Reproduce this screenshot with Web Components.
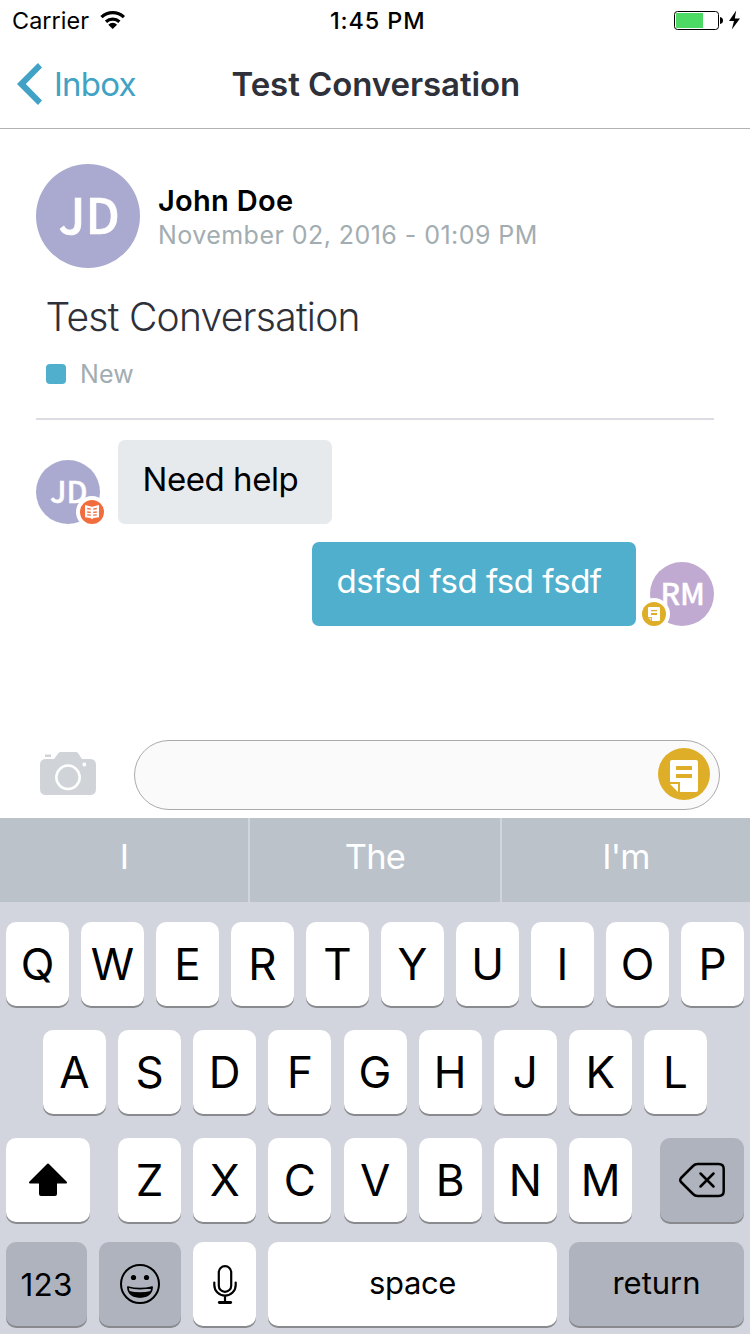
<!DOCTYPE html>
<html lang="en">
<head>
<meta charset="utf-8">
<title>Test Conversation</title>
<style>
  html, body { margin: 0; padding: 0; }
  body { width: 750px; height: 1334px; overflow: hidden; background: #fff; font-family: Inter, "Liberation Sans", sans-serif; }
</style>
</head>
<body>
<conversation-app></conversation-app>
<script>
class Base extends HTMLElement {
  connectedCallback() {
    if (this.shadowRoot) return;
    this.attachShadow({ mode: 'open' }).innerHTML =
      `<style>:host{box-sizing:border-box}*{box-sizing:border-box}svg{display:block;flex:none}</style>${this.render()}`;
  }
}
const define = (name, render) => customElements.define(name, class extends Base { render() { return render(this); } });

/* One line of text; capitals sit on the middle of the line box. */
define('text-line', el => `<style>
  :host { display: block; white-space: pre; flex: none;
    font-size: ${el.getAttribute('size')}px; line-height: ${el.getAttribute('line')}px;
    font-weight: ${el.getAttribute('weight') || 400}; letter-spacing: ${el.getAttribute('track') || 0}px; }
</style><slot></slot>`);

define('status-bar', () => `<style>
  :host { display: grid; grid-template-columns: 318px 1fr auto; height: 40px; padding: 0 9px 0 12px; color: #000; align-items: start; }
  .side { display: flex; align-items: flex-start; }
</style>
<div class="side"><text-line size="23.4" line="41" track="0.05">Carrier</text-line>
  <svg style="margin-left:10.5px" width="26" height="40" viewBox="100 0 26 40" fill="none" stroke="#000">
    <path d="M101.5 17.1A16.3 16.3 0 0 1 123.9 17.1" stroke-width="3.3"/>
    <path d="M106 21.8A9.9 9.9 0 0 1 119.4 21.8" stroke-width="3.2"/>
    <path d="M112.7 29L108.3 24.7A6.2 6.2 0 0 1 117.1 24.7Z" fill="#000" stroke="none"/>
  </svg></div>
<text-line size="23.4" line="41" weight="550" track="0.9">1:45 PM</text-line>
<svg width="68" height="40" viewBox="673 0 68 40">
  <rect x="674.5" y="11.5" width="44" height="18" rx="3" fill="#fff" stroke="#000"/>
  <path d="M677 13H703V28H677Q676 28 676 27V14Q676 13 677 13Z" fill="#4cd964"/>
  <path d="M720 17Q723 17.500 723 20.500Q723 23.500 720 24Z"/>
  <path d="M736.200 10.500L729 21H734L731.800 29.500L740 18.500H734.800Z"/>
</svg>`);

define('nav-bar', () => `<style>
  :host { display: grid; grid-template-columns: 231.5px 1fr; height: 89px; border-bottom: 1px solid #b2b2b2; align-items: center; color: #2e303a; }
  .back { display: flex; align-items: center; color: #40a2c4; height: 88px; }
  svg { margin: 0 11px 0 16px; }
</style>
<div class="back"><svg width="27" height="88" viewBox="16 40 27 88"><path d="M38 63L42 67.500L25.800 84L42 100.500L38 105L17 84Z" fill="#40a2c4"/></svg>
<text-line size="33" line="88" track="-0.8">Inbox</text-line></div>
<text-line size="33" line="88" weight="590" track="-0.07">Test Conversation</text-line>`);

define('user-avatar', el => {
  const s = +el.getAttribute('size'), f = el.getAttribute('font');
  return `<style>
  :host { display: flex; flex: none; position: relative; width: ${s}px; height: ${s}px; border-radius: 50%;
    background: ${el.getAttribute('color')}; color: #fff; align-items: center; justify-content: center; }
  span { font: 500 ${f}px/${s}px "Noto Sans CJK JP", "Noto Sans", sans-serif; height: ${s}px; margin-top: -${(f * 0.11).toFixed(1)}px;
    margin-left: ${f / 22}px; -webkit-text-stroke: ${f / 80}px #fff; }
  ::slotted(source-badge) { position: absolute; bottom: -4px; }
</style><span>${el.getAttribute('initials')}</span><slot></slot>`;
});

define('note-icon', el => `<style>:host{display:block;flex:none}</style>
<svg width="52" height="52" viewBox="0 0 52 52"><circle cx="26" cy="26" r="26" fill="#dfae28"/>
  <path d="M14 12H38Q40 12 40 14V42Q40 44 38 44H22V34H12V14Q12 12 14 12Z" fill="#fff"/>
  <path d="M18.500 18H33.500Q34 18 34 18.500V21.500Q34 22 33.500 22H18.500Q18 22 18 21.500V18.500Q18 18 18.500 18ZM18.500 26H33.500Q34 26 34 26.500V29.500Q34 30 33.500 30H18.500Q18 30 18 29.500V26.500Q18 26 18.500 26Z" fill="#dfae28"/><path d="M12 36H20V44Z" fill="#fff"/></svg>`);

define('source-badge', el => `<style>
  :host { display: block; width: 32px; height: 32px; padding: 4px; border-radius: 50%; background: #fff; }
</style>${el.getAttribute('kind') === 'note' ? `<svg width="24" height="24" viewBox="0 0 24 24"><circle cx="12" cy="12" r="12" fill="#dfae28"/>
  <path d="M7 5H17Q18 5 18 6V18Q18 19 17 19H10V15H6V6Q6 5 7 5Z" fill="#fff"/><path d="M9 8H15V9.300H9ZM9 11H15V13H9Z" fill="#dfae28"/><path d="M6.300 15.800H9.200V18.800Z" fill="#fff" opacity=".7"/></svg>`
  : `<svg width="24" height="24" viewBox="0 0 24 24"><circle cx="12" cy="12" r="12" fill="#f26d3d"/>
  <path d="M5 5L12 6.800L19 5V17.300L13.500 18L12 19.300L10.500 18L5 17.300Z" fill="#fff"/>
  <path d="M7.200 8.500L10.800 9.100M7.200 12L10.800 12.300M16.800 8.500L13.200 9.100M16.800 12L13.200 12.300M7.200 14.800L10.800 15.200M16.800 14.800L13.200 15.200" stroke="#f26d3d" stroke-width="1.300" fill="none"/></svg>`}`);

define('conversation-header', () => `<style>
  :host { display: flex; flex-direction: column; margin: 0 36px; height: 291px; padding-top: 35px; border-bottom: 2px solid #dcdde2; }
  .who { display: flex; gap: 18px; height: 104px; }
  .meta { padding-top: 20px; }
  .name { color: #000; } .date { color: #a2adb2; }
  .subject { color: #2e303a; padding: 26px 0 0 9.500px; }
  .status { display: flex; align-items: center; gap: 14px; padding: 19px 0 0 10px; color: #a2adb2; }
  .status i { width: 20px; height: 20px; border-radius: 4px; background: #4fafcc; }
</style>
<div class="who"><user-avatar size="104" font="49" color="#aaaad1" initials="JD"></user-avatar>
  <div class="meta"><text-line class="name" size="29" line="34" weight="590" track="0.3">John Doe</text-line>
  <text-line class="date" size="25" line="34" track="0.45">November 02, 2016 - 01:09 PM</text-line></div></div>
<text-line class="subject" size="39" line="46" weight="300" track="-0.74">Test Conversation</text-line>
<div class="status"><i></i><text-line size="25" line="30" track="0.1">New</text-line></div>`);

define('message-bubble', el => `<style>
  :host { display: block; height: 84px; padding: 0 24.500px; border-radius: 7px; width: ${el.getAttribute('width')}px;
    background: ${el.getAttribute('fill')}; color: ${el.getAttribute('ink')}; }
</style><text-line size="33" line="79" track="${el.getAttribute('track')}"><slot></slot></text-line>`);

define('message-list', () => `<style>
  :host { display: flex; flex-direction: column; gap: 18px; padding: 20px 36px 0; height: 320px; }
  .row { display: flex; align-items: flex-end; }
  .in { gap: 18px; } .out { justify-content: flex-end; gap: 14px; }
</style>
<div class="row in"><user-avatar size="64" font="30" color="#aaaad1" initials="JD"><source-badge kind="book" style="right:-8px"></source-badge></user-avatar>
  <message-bubble width="214" fill="#e6eaed" ink="#000" track="-0.45">Need help</message-bubble></div>
<div class="row out"><message-bubble width="324" fill="#4fafcc" ink="#fff" track="-0.5">dsfsd fsd fsd fsdf</message-bubble>
  <user-avatar size="64" font="30" color="#c1aad1" initials="RM"><source-badge kind="note" style="left:-12px"></source-badge></user-avatar></div>`);

define('reply-bar', () => `<style>
  :host { display: flex; padding: 0 30px 0 40px; height: 78px; }
  .cam { margin: 11px 38px 0 0; }
  .field { flex: 1; height: 70px; border: 1px solid #aaa; border-radius: 35px; background: #fafafa; display: flex; justify-content: flex-end; padding: 7px 9px; }
</style>
<svg class="cam" width="56" height="45" viewBox="40 751 56 45">
  <path d="M46 759H54L58.500 753Q59.300 752 60.500 752H76Q77.200 752 78 753L82 759H90Q96 759 96 765V789Q96 795 90 795H46Q40 795 40 789V765Q40 759 46 759Z" fill="#d0d4d8"/>
  <rect x="45" y="754.500" width="6" height="2.500" fill="#d0d4d8"/><circle cx="68" cy="777.300" r="11.700" fill="none" stroke="#fff" stroke-width="2.500"/><circle cx="84.300" cy="764.500" r="1.900" fill="#fff"/></svg>
<div class="field"><note-icon></note-icon></div>`);

define('suggestion-bar', () => `<style>
  :host { display: grid; grid-template-columns: 248px 250px 248px; gap: 2px; height: 84px; background: #d2d5dd; color: #fff; }
  div { background: #bbc2ca; display: flex; justify-content: center; }
  .first { padding-left: 1px; }
</style>
<div class="first"><text-line size="34.5" line="77">I</text-line></div>
<div><text-line size="34.5" line="77" track="-0.8">The</text-line></div>
<div><text-line size="34.5" line="77" track="-0.7">I'm</text-line></div>`);

define('key-cap', el => `<style>
  :host { display: flex; flex: none; justify-content: center; align-items: center; height: 84px; width: ${el.getAttribute('width') || 63}px;
    border-radius: 10px; color: #000; background: ${el.hasAttribute('dark') ? '#aeb3be' : '#fff'}; box-shadow: 0 2px 0 #898a8d; }
  ::slotted(text-line) { align-self: flex-start; }
</style><slot></slot>`);

const letters = s => [...s].map(c => `<key-cap><text-line size="44" line="84">${c}</text-line></key-cap>`).join('');

define('key-board', () => `<style>
  :host { display: flex; flex-direction: column; gap: 24px; height: 432px; padding: 20px 6px 0; background: #d2d5dd; }
  .row, .group { display: flex; justify-content: space-between; }
  .home { padding: 0 37px; } .group { width: 514px; justify-content: flex-start; gap: 12.200px; }
  .last { margin-top: -4px; justify-content: flex-start; gap: 12px; }
</style>
<div class="row">${letters('QWERTYUIOP')}</div>
<div class="row home">${letters('ASDFGHJKL')}</div>
<div class="row">
  <key-cap width="84"><svg width="40" height="36" viewBox="28 1162 40 36"><path d="M48 1164.500L66 1182.500H56V1194Q56 1195 55 1195H41Q40 1195 40 1194V1182.500H30Z" stroke="#000" stroke-width="2" stroke-linejoin="round"/></svg></key-cap>
  <div class="group">${letters('ZXCVBNM')}</div>
  <key-cap dark width="84"><svg width="48" height="36" viewBox="678 1162 48 36" fill="none" stroke="#000" stroke-width="2.500" stroke-linecap="round" stroke-linejoin="round">
    <path d="M697.500 1164H718.500Q723.700 1164 723.700 1169V1191Q723.700 1196 718.500 1196H697.500Q695 1196 693 1194L681 1182Q679.500 1180 681 1178L693 1166Q695 1164 697.500 1164Z"/><path d="M700.500 1173.500L713.500 1186.500M713.500 1173.500L700.500 1186.500"/></svg></key-cap>
</div>
<div class="row last">
  <key-cap dark width="81"><text-line size="31.5" line="86" track="0.2">123</text-line></key-cap>
  <key-cap dark width="82"><svg width="42" height="42" viewBox="0 0 42 42"><circle cx="21" cy="21" r="19" fill="none" stroke="#000" stroke-width="2"/><circle cx="14.500" cy="14.500" r="2.600"/><circle cx="27.500" cy="14.500" r="2.600"/>
    <path d="M8.800 24Q21 27.200 33.200 24Q32.500 34 21 34Q9.500 34 8.800 24Z" fill="none" stroke="#000" stroke-width="1.600" stroke-linejoin="round"/><path d="M10 28Q21 30.700 32 28Q29.500 34.500 21 34.500Q12.500 34.500 10 28Z"/></svg></key-cap>
  <key-cap><svg width="26" height="42" viewBox="0 0 26 42" fill="none" stroke="#000" stroke-width="2.200" stroke-linecap="round"><rect x="6.800" y="3.100" width="12.400" height="25.800" rx="6.200"/><path d="M2.300 19.500V22A10.700 10.700 0 0 0 23.700 22V19.500M13 33V38"/><path d="M7.300 39.500H18.700" stroke-width="2.800"/></svg></key-cap>
  <key-cap width="289"><text-line size="31" line="82" track="-0.4">space</text-line></key-cap>
  <key-cap dark width="175"><text-line size="31" line="82">return</text-line></key-cap>
</div>`);

define('conversation-app', () => `<style>:host { display: flex; flex-direction: column; width: 750px; height: 1334px; background: #fff; } :host > * { flex: none; }</style>
<status-bar></status-bar><nav-bar></nav-bar><conversation-header></conversation-header><message-list></message-list>
<reply-bar></reply-bar><suggestion-bar></suggestion-bar><key-board></key-board>`);
</script>
</body>
</html>
